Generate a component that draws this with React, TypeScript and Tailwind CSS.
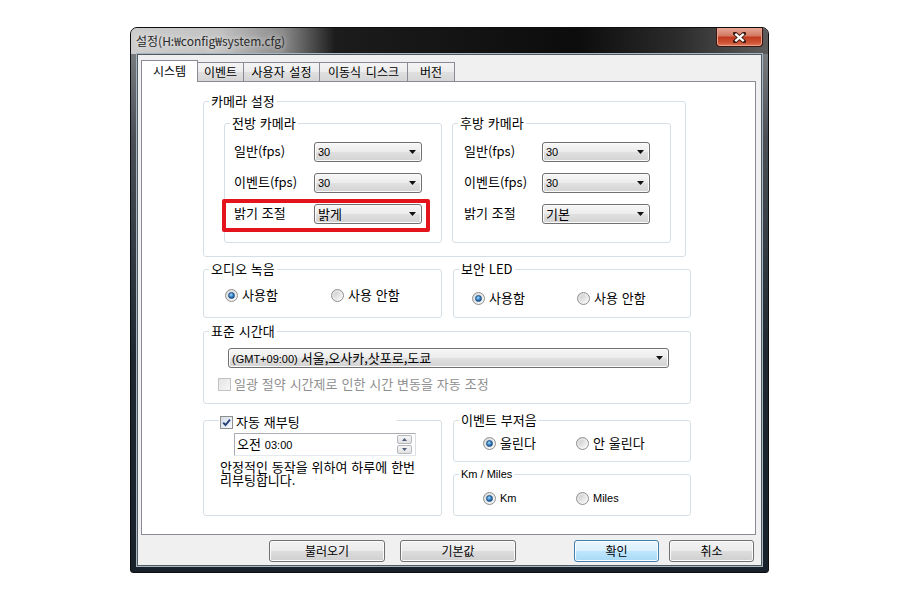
import { clsx } from 'clsx';
import type { ReactNode } from 'react';

const LATIN = "font-['Liberation_Sans',Arial,sans-serif] text-[11px] [word-spacing:0px]";

function Arrow() {
  return (
    <svg width="7" height="4" viewBox="0 0 7 4" className="shrink-0">
      <path d="M0 0h7L3.5 4z" fill="#111" />
    </svg>
  );
}

function Combo({ children, className, latin }: { children: ReactNode; className?: string; latin?: boolean }) {
  return (
    <div
      className={clsx(
        'h-[20px] flex items-center justify-between rounded-[3px] border border-[#707070] pl-[3px] pr-[5px]',
        'bg-[linear-gradient(#f7f7f7,#ececec_48%,#e0e0e0_52%,#d3d3d3)] shadow-[inset_0_0_0_1px_#fbfbfb]',
        className,
      )}
    >
      <span className={clsx('leading-[14px] whitespace-nowrap', latin && LATIN)}>{children}</span>
      <Arrow />
    </div>
  );
}

function Radio({ checked }: { checked?: boolean }) {
  return (
    <span className="w-[13px] h-[13px] rounded-full border border-[#8e8f8f] bg-[linear-gradient(135deg,#d8d8d8,#fbfbfb)] flex items-center justify-center shrink-0">
      {checked ? (
        <span className="w-[7px] h-[7px] rounded-full border border-[#1c4f82] bg-[radial-gradient(circle_at_40%_35%,#a4dcff,#2c75bb_55%,#123f72)]" />
      ) : (
        <span className="w-[7px] h-[7px] rounded-full bg-[linear-gradient(135deg,#cdcdcd,#f5f5f5)]" />
      )}
    </span>
  );
}

function Check({ checked, disabled }: { checked?: boolean; disabled?: boolean }) {
  return (
    <span
      className={clsx(
        'w-[13px] h-[13px] border flex items-center justify-center shrink-0',
        disabled
          ? 'border-[#c2c2c2] bg-[linear-gradient(135deg,#e4e4e4,#f7f7f7)]'
          : 'border-[#8e8f8f] bg-[linear-gradient(135deg,#d3dbe6,#f9fbff)]',
      )}
    >
      {checked && (
        <svg width="9" height="9" viewBox="0 0 9 9">
          <path d="M1.2 4.6l2.3 2.4L8 1.6" stroke="#25407a" strokeWidth="1.9" fill="none" />
        </svg>
      )}
    </span>
  );
}

function Group({ title, className, titleClass, children }: { title: ReactNode; className?: string; titleClass?: string; children?: ReactNode }) {
  return (
    <div className={clsx('rounded-[3px] border border-[#d5dfe5] flex flex-col shrink-0', className)}>
      <div className={clsx('-mt-[8px] ml-[5px] w-fit bg-white px-[2px] leading-[14px]', titleClass)}>{title}</div>
      {children}
    </div>
  );
}

function Opt({ checked, label, className, latin }: { checked?: boolean; label: string; className?: string; latin?: boolean }) {
  return (
    <div className={clsx('flex items-center gap-[4px] h-[14px]', className)}>
      <Radio checked={checked} />
      <span className={clsx('leading-[14px]', latin && LATIN)}>{label}</span>
    </div>
  );
}

function Btn({ label, className, def }: { label: string; className?: string; def?: boolean }) {
  return (
    <div
      className={clsx(
        'h-[22px] rounded-[3px] border flex items-center justify-center text-[12px] shadow-[inset_0_0_0_1px_#fcfcfc]',
        def
          ? 'border-[#3c7fb1] bg-[linear-gradient(#eaf6fd,#d9f0fc_50%,#bee6fd_50%,#a7d9f5)]'
          : 'border-[#707070] bg-[linear-gradient(#f2f2f2,#ebebeb_50%,#dddddd_50%,#cfcfcf)]',
        className,
      )}
    >
      {label}
    </div>
  );
}

const tabs = [
  { label: '이벤트', w: 'w-[46px]' },
  { label: '사용자 설정', w: 'w-[76px]' },
  { label: '이동식 디스크', w: 'w-[88px]' },
  { label: '버전', w: 'w-[47px]' },
];

export default function App() {
  return (
    <div className="w-[900px] h-[600px] bg-white pl-[130px] pt-[27px] overflow-hidden text-black text-[13px] leading-[14px] [word-spacing:1px] font-['Noto_Sans_CJK_KR','Liberation_Sans',sans-serif]">
      {/* window frame */}
      <div className="w-[639px] h-[546px] rounded-t-[7px] rounded-b-[3px] border border-[#0e0e0e] overflow-hidden flex flex-col bg-[linear-gradient(180deg,#85898d_0%,#4a5056_20%,#1f2830_60%,#17212b_100%)]">
        {/* title bar */}
        <div className="h-[26px] shrink-0 flex items-start justify-between bg-[linear-gradient(90deg,#cdcdcd_0%,#c2c2c2_14%,#8a8a8a_24%,#1c1c1c_32%,#0c0c0c_70%,#2c2c2c_86%,#5c5c5c_100%)]">
          <span className="mt-[6px] ml-[5px] text-[12px] [word-spacing:0px] text-[#2a2a2a] [text-shadow:0_0_6px_#ffffff]">설정(H:₩config₩system.cfg)</span>
          <div className="w-[47px] h-[19px] mr-[5px] rounded-b-[4px] border border-t-0 border-[#3b1710] flex items-center justify-center bg-[linear-gradient(#e9a898,#d27a63_42%,#c23a1f_52%,#cd5233_80%,#e27a5a)] shadow-[inset_0_0_0_1px_#e7a08c]">
            <svg width="13" height="11" viewBox="0 0 13 11">
              <path d="M2 1.5l9 8M11 1.5l-9 8" stroke="#3a1a14" strokeWidth="4" strokeLinecap="square" />
              <path d="M2.3 1.8l8.4 7.4M10.7 1.8l-8.4 7.4" stroke="#ffffff" strokeWidth="2.2" />
            </svg>
          </div>
        </div>

        {/* client area */}
        <div className="flex-1 mx-[6px] mb-[6px] bg-[#f0f0f0] border border-[#4d5b66] shadow-[0_0_0_1px_#a9b6bf] flex flex-col px-[3px] pt-[5px]">
          {/* tabs */}
          <div className="flex items-end h-[21px] text-[12px] [word-spacing:2px]">
            <div className="w-[57px] h-[22px] -mb-[1px] relative z-10 bg-white border border-b-0 border-[#898c95] flex items-start justify-center pt-[3px]">
              시스템
            </div>
            {tabs.map(t => (
              <div
                key={t.label}
                className={clsx(
                  t.w,
                  'h-[19px] border-t border-r border-[#898c95] flex items-center justify-center bg-[linear-gradient(#f4f4f4,#ececec_50%,#e0e0e0_50%,#d5d5d5)]',
                )}
              >
                {t.label}
              </div>
            ))}
          </div>

          {/* tab panel */}
          <div className="w-[615px] h-[454px] border border-[#898c95] bg-white pl-[61px] pt-[19px] flex flex-col">
            {/* camera settings */}
            <Group title="카메라 설정" className="w-[483px] h-[156px]">
              <div className="flex gap-[10px] pl-[20px] mt-[15px]">
                <Group title="전방 카메라" className="w-[218px] h-[120px]">
                  <div className="flex flex-col gap-[11px] mt-[12px] pl-[9px]">
                    <div className="flex items-center">
                      <span className="w-[80px] -mt-[3px]">일반(fps)</span>
                      <Combo latin className="w-[108px]">30</Combo>
                    </div>
                    <div className="flex items-center">
                      <span className="w-[80px] -mt-[3px]">이벤트(fps)</span>
                      <Combo latin className="w-[108px]">30</Combo>
                    </div>
                    <div className="flex items-center relative">
                      <span className="w-[80px] -mt-[3px]">밝기 조절</span>
                      <Combo className="w-[108px]">밝게</Combo>
                      {/* highlight annotation */}
                      <div className="absolute left-[-12px] top-[-5px] w-[208px] h-[33px] border-[4px] border-[#e3141c] rounded-[2px]" />
                    </div>
                  </div>
                </Group>
                <Group title="후방 카메라" className="w-[219px] h-[120px]">
                  <div className="flex flex-col gap-[11px] mt-[12px] pl-[11px]">
                    <div className="flex items-center">
                      <span className="w-[78px] -mt-[3px]">일반(fps)</span>
                      <Combo latin className="w-[108px]">30</Combo>
                    </div>
                    <div className="flex items-center">
                      <span className="w-[78px] -mt-[3px]">이벤트(fps)</span>
                      <Combo latin className="w-[108px]">30</Combo>
                    </div>
                    <div className="flex items-center">
                      <span className="w-[78px] -mt-[3px]">밝기 조절</span>
                      <Combo className="w-[108px]">기본</Combo>
                    </div>
                  </div>
                </Group>
              </div>
            </Group>

            {/* audio / LED */}
            <div className="flex gap-[11px] mt-[12px]">
              <Group title="오디오 녹음" className="w-[239px] h-[49px]">
                <div className="flex mt-[12px] pl-[21px]">
                  <Opt checked label="사용함" className="w-[106px]" />
                  <Opt label="사용 안함" />
                </div>
              </Group>
              <Group title="보안 LED" className="w-[238px] h-[49px]">
                <div className="flex mt-[15px] pl-[18px]">
                  <Opt checked label="사용함" className="w-[105px]" />
                  <Opt label="사용 안함" />
                </div>
              </Group>
            </div>

            {/* time zone */}
            <Group title="표준 시간대" className="w-[488px] h-[73px] mt-[13px]">
              <Combo className="w-[441px] ml-[24px] mt-[10px]">
                <span className={LATIN}>(GMT+09:00) </span>서울,오사카,삿포로,도쿄
              </Combo>
              <div className="flex items-center gap-[3px] ml-[14px] mt-[9px] h-[14px]">
                <Check disabled />
                <span className="text-[#8f8f8f]">일광 절약 시간제로 인한 시간 변동을 자동 조정</span>
              </div>
            </Group>

            {/* reboot / buzzer / units */}
            <div className="flex gap-[11px] mt-[16px]">
              <div className="w-[239px] h-[96px] rounded-[3px] border border-[#d5dfe5] flex flex-col">
                <div className="-mt-[6px] ml-[15px] w-[178px] bg-white pl-[1px] flex items-center gap-[3px] h-[14px]">
                  <Check checked />
                  <span>자동 재부팅</span>
                </div>
                <div className="ml-[30px] mt-[4px] w-[182px] h-[23px] border border-[#abadb3] border-r-[#dbdfe6] border-b-[#e3e9ef] bg-white flex items-center justify-between pl-[2px] pr-[3px]">
                  <span className="leading-[14px]">
                    오전 <span className={LATIN}>03:00</span>
                  </span>
                  <div className="flex flex-col gap-[1px]">
                    <div className="w-[15px] h-[9px] rounded-[2px] border border-[#b5b8bd] bg-[linear-gradient(#f6f6f6,#e2e2e2)] flex items-center justify-center">
                      <svg width="5" height="3" viewBox="0 0 5 3"><path d="M0 3h5L2.5 0z" fill="#4b5f7a" /></svg>
                    </div>
                    <div className="w-[15px] h-[9px] rounded-[2px] border border-[#b5b8bd] bg-[linear-gradient(#f6f6f6,#e2e2e2)] flex items-center justify-center">
                      <svg width="5" height="3" viewBox="0 0 5 3"><path d="M0 0h5L2.5 3z" fill="#4b5f7a" /></svg>
                    </div>
                  </div>
                </div>
                <div className="ml-[16px] mt-[4px] leading-[13px]">
                  안정적인 동작을 위하여 하루에 한번
                  <br />
                  리부팅합니다.
                </div>
              </div>

              <div className="flex flex-col gap-[12px]">
                <Group title="이벤트 부저음" className="w-[238px] h-[42px]">
                  <div className="flex mt-[9px] pl-[29px]">
                    <Opt checked label="울린다" className="w-[93px]" />
                    <Opt label="안 울린다" />
                  </div>
                </Group>
                <Group title="Km / Miles" titleClass={LATIN} className="w-[238px] h-[42px]">
                  <div className="flex mt-[10px] pl-[29px]">
                    <Opt checked latin label="Km" className="w-[93px]" />
                    <Opt latin label="Miles" />
                  </div>
                </Group>
              </div>
            </div>
          </div>

          {/* buttons */}
          <div className="flex mt-[5px]">
            <Btn label="불러오기" className="ml-[128px] w-[116px]" />
            <Btn label="기본값" className="ml-[15px] w-[116px]" />
            <Btn label="확인" def className="ml-[58px] w-[85px]" />
            <Btn label="취소" className="ml-[10px] w-[85px]" />
          </div>
        </div>
      </div>
    </div>
  );
}
